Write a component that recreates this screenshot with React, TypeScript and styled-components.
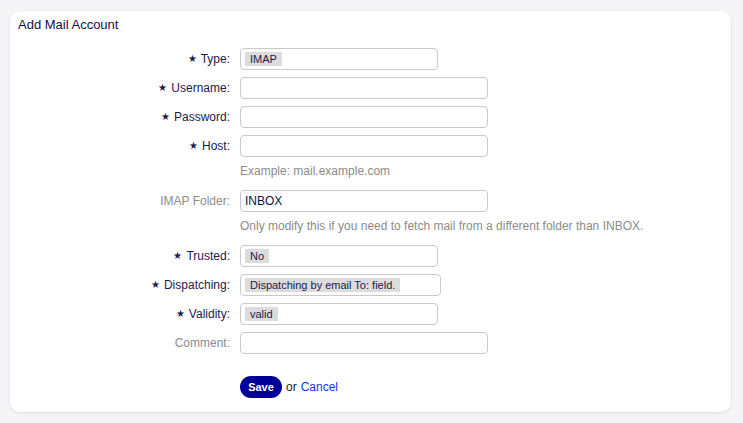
import styled, { createGlobalStyle } from "styled-components";

const GlobalStyle = createGlobalStyle`
  html, body {
    margin: 0;
    padding: 0;
    background: #f5f5f8;
    font-family: "Liberation Sans", Arial, sans-serif;
  }
`;

const Page = styled.div`
  padding: 11px 12px 11px 10px;
`;

const Card = styled.div`
  background: #ffffff;
  border-radius: 10px;
  box-shadow: 0 1px 3px rgba(40, 40, 80, 0.12);
  padding: 6px 8px 14px 8px;
`;

const Title = styled.h2`
  margin: 0;
  font-size: 13px;
  font-weight: 400;
  color: #111142;
  line-height: 15px;
`;

const Form = styled.div`
  display: flex;
  flex-direction: column;
  gap: 7px;
  margin-top: 16px;
`;

const Row = styled.div`
  display: flex;
  align-items: center;
  gap: 10px;
`;

const Label = styled.label<{ $muted?: boolean }>`
  width: 212px;
  text-align: right;
  font-size: 12px;
  color: ${(p) => (p.$muted ? "#8c8c8c" : "#1b1b4d")};
`;

const Star = styled.span`
  font-size: 10px;
  margin-right: 4px;
  position: relative;
  top: -1px;
`;

const TextInput = styled.input`
  box-sizing: border-box;
  width: 248px;
  height: 22px;
  border: 1px solid #c9c9c9;
  border-radius: 4px;
  padding: 0 4px;
  font-family: inherit;
  font-size: 12px;
  color: #111142;
  background: #fff;
  outline: none;
`;

const Select = styled.div<{ $width: number }>`
  box-sizing: border-box;
  width: ${(p) => p.$width}px;
  height: 22px;
  border: 1px solid #c9c9c9;
  border-radius: 4px;
  padding: 2px 4px;
  display: flex;
  align-items: center;
`;

const Chip = styled.span`
  background: #dcdcdc;
  color: #1b1b4d;
  font-size: 11px;
  line-height: 14px;
  padding: 0 5px;
`;

const Help = styled.div`
  margin-left: 222px;
  margin-bottom: 5px;
  font-size: 12px;
  line-height: 14px;
  color: #8c8c8c;
`;

const Actions = styled.div`
  display: flex;
  align-items: center;
  gap: 4px;
  margin-left: 222px;
  margin-top: 22px;
  font-size: 12px;
  color: #222;
`;

const SaveButton = styled.button`
  height: 22px;
  width: 42px;
  border: none;
  border-radius: 11px;
  background: #000099;
  color: #fff;
  font-family: inherit;
  font-weight: 700;
  font-size: 11px;
  padding: 0;
`;

const CancelLink = styled.a`
  color: #1133ee;
  text-decoration: none;
`;

function Req() {
  return <Star>★</Star>;
}

export default function App() {
  return (
    <>
      <GlobalStyle />
      <Page>
        <Card>
          <Title>Add Mail Account</Title>
          <Form>
            <Row>
              <Label><Req />Type:</Label>
              <Select $width={198}><Chip>IMAP</Chip></Select>
            </Row>
            <Row>
              <Label><Req />Username:</Label>
              <TextInput />
            </Row>
            <Row>
              <Label><Req />Password:</Label>
              <TextInput type="password" />
            </Row>
            <Row>
              <Label><Req />Host:</Label>
              <TextInput />
            </Row>
            <Help>Example: mail.example.com</Help>
            <Row>
              <Label $muted>IMAP Folder:</Label>
              <TextInput defaultValue="INBOX" />
            </Row>
            <Help>Only modify this if you need to fetch mail from a different folder than INBOX.</Help>
            <Row>
              <Label><Req />Trusted:</Label>
              <Select $width={198}><Chip>No</Chip></Select>
            </Row>
            <Row>
              <Label><Req />Dispatching:</Label>
              <Select $width={201}><Chip>Dispatching by email To: field.</Chip></Select>
            </Row>
            <Row>
              <Label><Req />Validity:</Label>
              <Select $width={198}><Chip>valid</Chip></Select>
            </Row>
            <Row>
              <Label $muted>Comment:</Label>
              <TextInput />
            </Row>
          </Form>
          <Actions>
            <SaveButton>Save</SaveButton>
            <span>or</span>
            <CancelLink href="#">Cancel</CancelLink>
          </Actions>
        </Card>
      </Page>
    </>
  );
}
